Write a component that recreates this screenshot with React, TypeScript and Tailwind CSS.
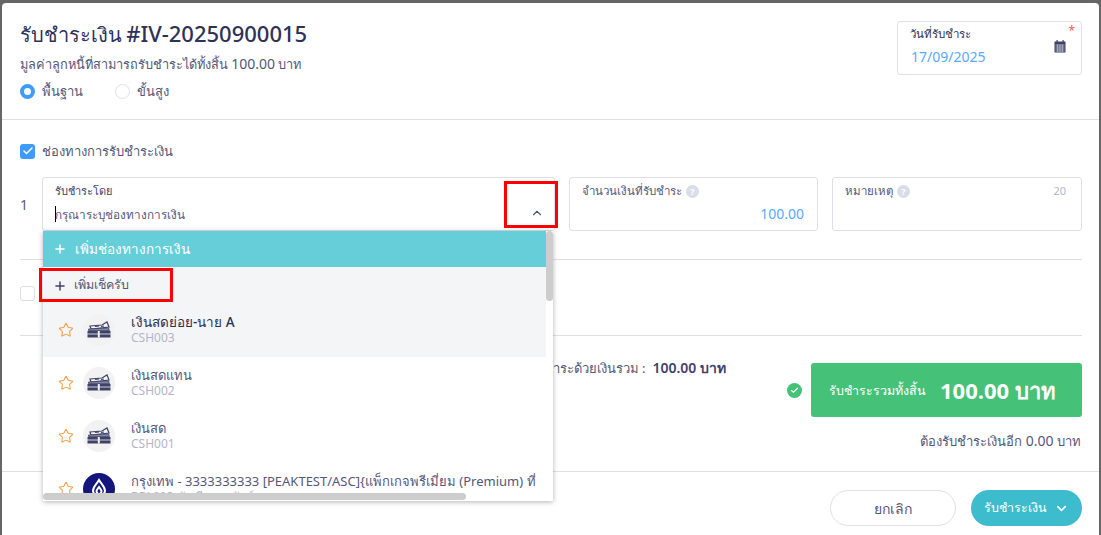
import { Check, ChevronDown, ChevronUp, Plus, Star } from "lucide-react";

const FONT = "font-['Noto_Sans','Noto_Sans_CJK_SC',sans-serif]";

function CashIcon() {
  return (
    <div className="w-8 h-8 rounded-full bg-[#f2f2f3] flex items-center justify-center shrink-0">
      <svg width="24" height="17" viewBox="0 0 24 17">
        <path d="M3 5 L15 4 L20 1 L22 6 L4 8 Z" fill="#f7f7f9" stroke="#3f4267" strokeWidth="1.200" />
        <path d="M8 5.500 L12 4.800 M14 5.500 L17 5" stroke="#3f4267" strokeWidth="1.200" />
        <path d="M1.500 8 L21.500 7 L22.500 9.500 H1.500 Z" fill="#8688a3" stroke="#3f4267" strokeWidth="0.800" />
        <path d="M0.500 10 H23.500 V12.600 H0.500 Z" fill="#3f4267" />
        <path d="M0.500 13.400 H23.500 V16.500 H0.500 Z" fill="#3f4267" />
        <rect x="10.800" y="10" width="2" height="6.500" fill="#f2f2f3" />
      </svg>
    </div>
  );
}

function BankIcon() {
  return (
    <div className="w-8 h-8 rounded-full bg-[#15157e] flex items-center justify-center shrink-0 overflow-hidden">
      <svg width="20" height="22" viewBox="0 0 20 22" fill="none" stroke="#fff" strokeWidth="2">
        <path d="M10 2 C13 7 16 9 16 13 C16 16 13 17 10 20 C7 17 4 16 4 13 C4 9 7 7 10 2 Z" />
        <path d="M10 9 C11.500 11 12.500 12 12.500 13.500 C12.500 15 11 15.500 10 16.500 C9 15.500 7.500 15 7.500 13.500 C7.500 12 8.500 11 10 9 Z" />
      </svg>
    </div>
  );
}

function Row({ name, code, active, bank }: { name: string; code: string; active?: boolean; bank?: boolean }) {
  return (
    <div className={`h-[53px] w-[503px] shrink-0 flex items-center pl-[15px] pb-[2px] ${active ? "bg-[#f4f5f7]" : "bg-white"}`}>
      <Star size={16} strokeWidth={1.6} className="text-[#f5a04f] shrink-0 mr-[9px]" />
      {bank ? <BankIcon /> : <CashIcon />}
      <div className="ml-4 min-w-0 whitespace-nowrap -mt-[1px]">
        <div className={`leading-[17px] ${active ? "text-[13.5px] text-[#2d2f52] font-medium" : "text-[13px] text-[#55577a]"}`}>{name}</div>
        <div className="text-[12px] leading-[13px] text-[#b3b5c7]">{code}</div>
      </div>
    </div>
  );
}

function Help() {
  return (
    <span className="inline-flex w-[13px] h-[13px] rounded-full bg-[#dcdce8] text-white text-[9px] leading-none items-center justify-center font-bold ml-1">?</span>
  );
}

function Field({ label, children, className }: { label: React.ReactNode; children?: React.ReactNode; className?: string }) {
  return (
    <div className={`h-[54px] border border-[#dfdfea] rounded-[3px] bg-white relative shrink-0 ${className ?? ""}`}>
      <div className="pl-[12px] pt-[3px] text-[11.5px] leading-[20px] text-[#55577a] flex items-center">{label}</div>
      {children}
    </div>
  );
}

export default function App() {
  return (
    <div className={`${FONT} relative h-[535px] w-full overflow-hidden bg-[#666666] pt-[3px] px-[2px]`}>
      <div className="h-[532px] bg-white rounded-t-[4px] flex flex-col">
        <header className="h-[117px] shrink-0 border-b border-[#dfdfea] pl-[18px] pr-[17px] flex justify-between">
          <div>
            <h1 className="mt-[16px] leading-[28px] font-medium text-[#2f3159] whitespace-nowrap">
              <span className="text-[20px]">รับชำระเงิน</span> <span className="text-[22px]">#IV-20250900015</span>
            </h1>
            <p className="mt-[5px] text-[12.75px] leading-[18px] text-[#55577a]">มูลค่าลูกหนี้ที่สามารถรับชำระได้ทั้งสิ้น <span className="text-[14px]">100.00</span> บาท</p>
            <div className="mt-[8px] flex items-center text-[13px] leading-[20px] text-[#55577a]">
              <span className="w-[15px] h-[15px] rounded-full border-[4px] border-[#3f9cff] bg-white mr-[7px]" />
              <span className="w-[73px]">พื้นฐาน</span>
              <span className="w-[15px] h-[15px] rounded-full border border-[#dfdfea] bg-white mr-[7px]" />
              <span>ขั้นสูง</span>
            </div>
          </div>
          <div className="mt-[18px] w-[185px] h-[54px] border border-[#dfdfea] rounded-[3px] relative pl-[12px] pt-[3px]">
            <div className="text-[11.5px] leading-[18px] text-[#2f3159]">วันที่รับชำระ</div>
            <div className="text-[14px] leading-[20px] mt-[4px] ml-[1px] text-[#5aa9ff]">17/09/2025</div>
            <span className="absolute right-[6px] top-[1px] text-[#f0604d] text-[12px] leading-[16px]">*</span>
            <svg className="absolute right-[15px] top-[18px]" width="12" height="13" viewBox="0 0 12 13" fill="#3f4267">
              <rect x="0.500" y="1.500" width="11" height="11" />
              <rect x="2.500" y="0" width="1.200" height="2" />
              <rect x="8.500" y="0" width="1.200" height="2" />
              <path d="M1.500 5 H10.500 M1.500 7 H10.500 M1.500 9 H10.500 M1.500 11 H10.500 M3.700 4.500 V12 M6 4.500 V12 M8.300 4.500 V12" stroke="#fff" strokeWidth="0.500" />
            </svg>
          </div>
        </header>

        <main className="flex-1 pl-[18px] pr-[17px] min-h-0">
          <label className="mt-[21px] flex items-center text-[13px] leading-[20px] text-[#55577a]">
            <span className="w-[15px] h-[15px] rounded-[3px] bg-[#3f9cff] flex items-center justify-center mr-[7px]">
              <Check size={12} strokeWidth={3} className="text-white" />
            </span>
            ช่องทางการรับชำระเงิน
          </label>

          <div className="mt-[16px] flex items-center">
            <span className="w-[22px] text-[14px] text-[#55577a]">1</span>
            <Field label={<span className="text-[11px] font-medium text-[#3f4267]">รับชำระโดย</span>} className="w-[513px]">
              <div className="pl-[12px] mt-[3px] text-[11.75px] leading-[20px] text-[#55577a] flex items-center">
                <span className="w-px h-[16px] bg-black -mr-px" />
                กรุณาระบุช่องทางการเงิน
              </div>
              <ChevronUp size={14} strokeWidth={2} className="absolute right-[10px] top-[28px] text-[#55577a]" />
            </Field>
            <Field
              className="w-[249px] ml-[14px]"
              label={<>จำนวนเงินที่รับชำระ<Help /></>}
            >
              <div className="pr-[13px] mt-[3px] text-right text-[14px] leading-[20px] text-[#5aa9ff]">100.00</div>
            </Field>
            <Field
              className="w-[250px] ml-[14px]"
              label={<>หมายเหตุ<Help /><span className="ml-auto mr-[15px] text-[#b3b5c7] text-[11px]">20</span></>}
            />
          </div>

          <div className="mt-[28px] border-t border-[#dfdfea]" />
          <div className="h-[75px] flex items-center pb-[8px]">
            <span className="w-[15px] h-[15px] rounded-[3px] border border-[#dfdfea]" />
          </div>
          <div className="border-t border-[#dfdfea]" />

          <div className="flex justify-end mt-[27px]">
            <div className="flex flex-col items-end">
              <div className="flex items-center">
                <span className="self-start -mt-[5px] leading-[20px] mr-[61px] text-[13px] text-[#55577a] whitespace-nowrap">
                  รับชำระด้วยเงินรวม :<span className="ml-[7px] text-[14px] font-semibold text-[#3f4267]">100.00 บาท</span>
                </span>
                <span className="w-[15px] h-[15px] rounded-full bg-[#45c178] flex items-center justify-center mr-[9px]">
                  <Check size={9} strokeWidth={3} className="text-white" />
                </span>
                <div className="w-[271px] h-[54px] rounded-[3px] bg-[#45c178] text-white flex items-center pl-[18px] whitespace-nowrap">
                  <span className="text-[12.5px] mt-[3px]">รับชำระรวมทั้งสิ้น</span>
                  <span className="ml-[14px] text-[22px] font-bold">100.00 บาท</span>
                </div>
              </div>
              <div className="mt-[14px] text-[13px] leading-[20px] text-[#55577a] pr-[1px]">ต้องรับชำระเงินอีก <span className="text-[14px]">0.00</span> บาท</div>
            </div>
          </div>
        </main>

        <footer className="h-[64px] shrink-0 border-t border-[#dfdfea] flex items-start justify-end pt-[18px] pr-[17px] text-[14px]">
          <button className="w-[126px] h-9 rounded-full border border-[#dfdfea] text-[#55577a] bg-white">ยกเลิก</button>
          <button className="w-[111px] h-9 ml-[15px] rounded-full bg-[#3cbccd] text-white text-[12.5px] flex items-center justify-center gap-[7px]">
            รับชำระเงิน
            <ChevronDown size={15} strokeWidth={2.5} />
          </button>
        </footer>
      </div>

      {/* dropdown overlay */}
      <div className="absolute left-[43px] top-[231px] w-[510px] h-[270px] bg-white shadow-[0_1px_5px_rgba(0,0,0,0.3)] overflow-hidden flex flex-col">
        <div className="h-[36px] w-[503px] shrink-0 bg-[#66ced9] text-white flex items-center pl-[10px] text-[13.5px]">
          <Plus size={14} strokeWidth={2.5} className="mr-[8px]" />
          เพิ่มช่องทางการเงิน
        </div>
        <div className="h-[37px] w-[503px] shrink-0 bg-[#f4f5f7] text-[#55577a] flex items-center pl-[10px] text-[12.5px]">
          <Plus size={14} strokeWidth={2.5} className="text-[#3f4267] mr-[7px]" />
          เพิ่มเช็ครับ
        </div>
        <Row name="เงินสดย่อย-นาย A" code="CSH003" active />
        <Row name="เงินสดแทน" code="CSH002" />
        <Row name="เงินสด" code="CSH001" />
        <Row name="กรุงเทพ - 3333333333 [PEAKTEST/ASC]{แพ็กเกจพรีเมี่ยม (Premium) ที่" code="BBL002 บัญชีออมทรัพย์" bank />
        {/* scrollbars */}
        <div className="absolute right-0 top-0 w-[7px] h-full bg-white">
          <div className="absolute left-0 top-0 w-[7px] h-[70px] rounded bg-[#cdcdcd]" />
        </div>
        <div className="absolute left-0 bottom-0 w-full h-[8px] bg-white">
          <div className="absolute left-0 top-0 h-[7px] w-[423px] rounded bg-[#cdcdcd]" />
        </div>
      </div>

      {/* annotation boxes */}
      <div className="absolute left-[504px] top-[181px] w-[54px] h-[47px] border-[3px] border-[#ff0000]" />
      <div className="absolute left-[39px] top-[268px] w-[134px] h-[34px] border-[3px] border-[#ff0000]" />
    </div>
  );
}
